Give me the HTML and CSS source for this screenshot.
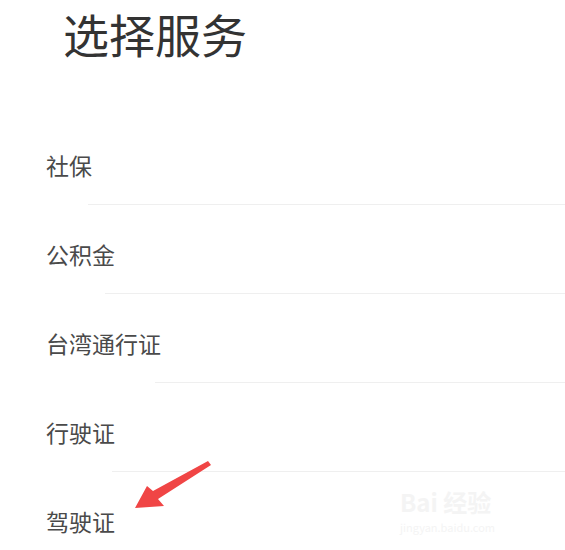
FILE: index.html
```html
<!DOCTYPE html>
<html lang="zh-CN">
<head>
<meta charset="utf-8">
<title>选择服务</title>
<link rel="stylesheet" href="styles.css">
</head>
<body>
<div class="page">
  <h1 class="title">选择服务</h1>
  <ul class="list">
    <li class="row row-1">社保</li>
    <li class="row row-2">公积金</li>
    <li class="row row-3">台湾通行证</li>
    <li class="row row-4">行驶证</li>
    <li class="row row-5">驾驶证</li>
  </ul>
  <svg class="arrow" width="90" height="60" viewBox="130 455 90 60" aria-hidden="true">
    <polygon points="135,508 147,486 153,491 208,461 211,465 158,499 164,506" fill="#f04545"/>
  </svg>
  <div class="watermark">
    <span class="wm-big">Bai 经验</span>
    <span class="wm-small">jingyan.baidu.com</span>
  </div>
</div>
</body>
</html>
```

FILE: styles.css
```css
html, body {
  margin: 0;
  padding: 0;
  background: #ffffff;
  overflow: hidden;
}

.page {
  position: relative;
  width: 565px;
  height: 550px;
  font-family: "Noto Sans CJK SC", "Noto Sans", sans-serif;
}

.title {
  margin: 0;
  padding: 3px 0 0 63px;
  height: 116px;
  box-sizing: border-box;
  font-size: 46px;
  line-height: 60px;
  font-weight: 400;
  color: #333333;
}

.list {
  list-style: none;
  margin: 0;
  padding: 0;
}

.row {
  padding: 37px 0 0 46px;
  font-size: 23px;
  line-height: 24px;
  color: #4a4a4a;
}

.row::after {
  content: "";
  display: block;
  height: 1px;
  margin-top: 27px;
  background: #efefef;
}

.row-1::after { margin-left: 42px; }
.row-2::after { margin-left: 59px; }
.row-3::after { margin-left: 109px; }
.row-4::after { margin-left: 66px; }
.row-5::after { display: none; }

.arrow {
  position: absolute;
  left: 130px;
  top: 455px;
}

.watermark {
  position: absolute;
  left: 400px;
  top: 488px;
  display: flex;
  flex-direction: column;
  align-items: flex-start;
  gap: 4px;
  color: #f4f4f4;
}

.wm-big {
  font-size: 24px;
  line-height: 28px;
  font-weight: 700;
}

.wm-small {
  font-size: 11px;
  line-height: 14px;
}
```
